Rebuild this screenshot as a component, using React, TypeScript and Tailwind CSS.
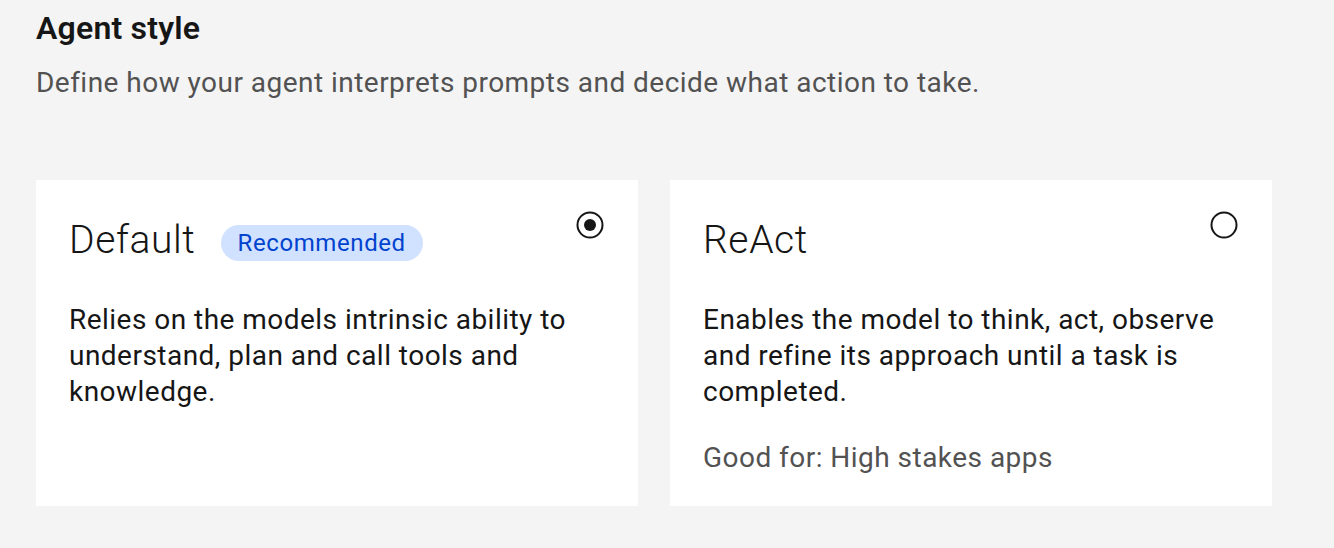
import React, { useState } from 'react';

type Style = {
  id: string;
  name: string;
  tag?: string;
  description: string;
  goodFor?: string;
};

const styles: Style[] = [
  {
    id: 'default',
    name: 'Default',
    tag: 'Recommended',
    description: 'Relies on the models intrinsic ability to understand, plan and call tools and knowledge.',
  },
  {
    id: 'react',
    name: 'ReAct',
    description: 'Enables the model to think, act, observe and refine its approach until a task is completed.',
    goodFor: 'Good for: High stakes apps',
  },
];

function Radio({ checked }: { checked: boolean }) {
  return (
    <svg width="28" height="28" viewBox="0 0 28 28" className="shrink-0 mt-[-1px]">
      <circle cx="14" cy="14" r="12.5" fill="none" stroke="#161616" strokeWidth="2" />
      {checked && <circle cx="14" cy="14" r="6" fill="#161616" />}
    </svg>
  );
}

export default function App() {
  const [selected, setSelected] = useState('default');

  return (
    <div className="min-h-screen bg-[#f4f4f4] pl-[36px] pt-[8px] font-['Roboto',sans-serif] text-[#161616]">
      <h2 className="text-[32px] leading-[40px] font-semibold tracking-[0.2px]">Agent style</h2>
      <p className="mt-[17px] text-[28px] leading-[36px] tracking-[0.47px] text-[#525252]">
        Define how your agent interprets prompts and decide what action to take.
      </p>

      <div className="mt-[79px] grid w-[1236px] grid-cols-2 gap-8">
        {styles.map((s) => (
          <div
            key={s.id}
            onClick={() => setSelected(s.id)}
            className="flex cursor-pointer flex-col bg-white pb-[30px] pl-[33px] pr-[34px] pt-8"
          >
            <div className="flex items-start justify-between">
              <div className="mt-1 flex items-center gap-[25px]">
                <span className="text-[39px] leading-[48px] font-light tracking-[0.6px]">{s.name}</span>
                {s.tag && (
                  <span className="mt-[6px] flex h-[36px] items-center rounded-full bg-[#d0e2ff] px-[17px] text-[24px] tracking-[0.6px] text-[#0043ce]">
                    {s.tag}
                  </span>
                )}
              </div>
              <Radio checked={selected === s.id} />
            </div>
            <p className="mt-[38px] text-[28px] leading-[36px] tracking-[0.47px]">{s.description}</p>
            {s.goodFor && (
              <p className="mt-[30px] text-[28px] leading-[36px] tracking-[0.47px] text-[#525252]">{s.goodFor}</p>
            )}
          </div>
        ))}
      </div>
    </div>
  );
}
